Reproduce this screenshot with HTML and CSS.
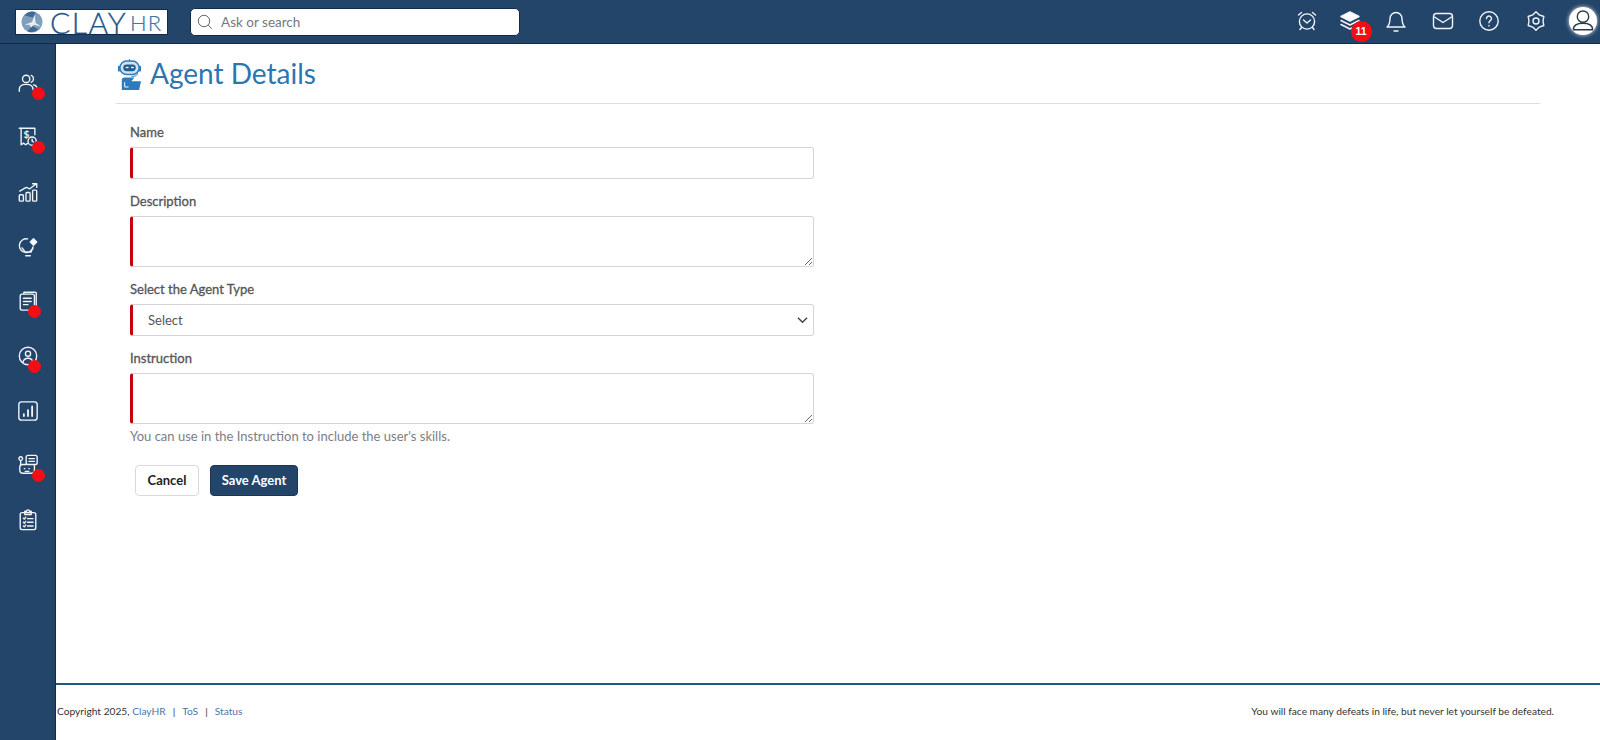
FILE: index.html
```html
<!DOCTYPE html>
<html lang="en">
<head>
<meta charset="utf-8">
<title>Agent Details</title>
<link rel="stylesheet" href="styles.css">
</head>
<body>
<header class="topbar">
  <div class="logo">
    <svg class="logo-mark" viewBox="0 0 24 24"><circle cx="12" cy="12" r="11.5" fill="#7f9fbd"/><path d="M4 5a11 11 0 0 1 12-4l-3 6z" fill="#3f6a94"/><path d="M19 20a11 11 0 0 1-12 2l5-6z" fill="#41698f"/><path d="M4 15l8-3 3-8 1 9 6 4-8-2-3 3-2-3z" fill="#e8eef4"/></svg>
    <span class="logo-clay">CLAY</span><span class="logo-hr">HR</span>
  </div>
  <div class="search">
    <svg class="search-icon" viewBox="0 0 16 16"><circle cx="7" cy="7" r="5.7"/><path d="M11.2 11.2l3.6 3.6"/></svg>
    <span>Ask or search</span>
  </div>
  <nav class="top-icons">
    <button class="top-btn top-btn-first"><svg viewBox="0 0 24 24"><circle cx="12" cy="12.500" r="7.600"/><path d="M8.500 11l3.500 3 3.500-3M3.500 6L6.500 3.500M20.500 6L17.500 3.500M6.500 18.500L5 20.500M17.500 18.500L19 20.500"/></svg></button>
    <button class="top-btn"><svg viewBox="0 0 24 24"><path d="M12 3l9 4.500-9 4.500-9-4.500z" fill="#fff"/><path d="M3 11.500l9 4.500 9-4.500M3 15.500l9 4.500 9-4.500"/></svg><span class="count">11</span></button>
    <button class="top-btn"><svg viewBox="0 0 24 24"><path d="M3 18c2.500-2 3-4 3-8.500a6 6 0 0 1 12 0c0 4.500.5 6.500 3 8.500zM10 22h4"/></svg></button>
    <button class="top-btn"><svg viewBox="0 0 24 24"><rect x="2.500" y="4.500" width="19" height="15" rx="3"/><path d="M3.500 8l8.500 5.500L20.500 8"/></svg></button>
    <button class="top-btn"><svg viewBox="0 0 24 24"><circle cx="12" cy="12" r="9.200"/><path d="M9.500 9.500a2.500 2.500 0 1 1 3.800 2.100c-.9.6-1.300 1.100-1.300 2.100M12 16.500v.5"/></svg></button>
    <button class="top-btn"><svg viewBox="0 0 24 24"><path d="M12 2.800L15.300 5.900 19.800 7.500 19 12 19.800 16.500 15.300 18.100 12 21.200 8.700 18.100 4.200 16.500 5 12 4.200 7.500 8.700 5.900z"/><circle cx="12" cy="12" r="3"/></svg></button>
    <div class="avatar"><svg viewBox="0 0 32 32"><circle cx="16" cy="11" r="6.500"/><path d="M5 26c0-5 4-7.500 11-7.500S27 21 27 26z"/></svg></div>
  </nav>
</header>
<div class="shell">
  <aside class="sidebar">
    <a class="side-item"><svg viewBox="0 0 24 24"><circle cx="10" cy="7.500" r="4"/><path d="M15.500 3.800a4 4 0 0 1 0 7.400M2.500 21v-2c0-3.500 3-5.500 7.500-5.500s7.500 2 7.500 5.500M18 14c2.500.5 4 2 4 4.500"/></svg><i class="dot"></i></a>
    <a class="side-item"><svg viewBox="0 0 24 24"><path d="M2.500 2.500h17v7M4.500 2.500v18l2.500-1.800 2.500 1.800 2-1.500"/><circle cx="16.500" cy="16.500" r="4.500"/><path d="M16.500 14.500v2l1.500 1"/><text x="7.200" y="13.500" class="dollar">$</text></svg><i class="dot"></i></a>
    <a class="side-item"><svg viewBox="0 0 24 24"><rect x="2.500" y="15" width="4.500" height="7" rx="1"/><rect x="9.800" y="12.500" width="4.500" height="9.500" rx="1"/><rect x="17" y="10" width="4.500" height="12" rx="1"/><path d="M3 11l7-4 4 1.500 7-5.500M17 3h4.500v4"/></svg></a>
    <a class="side-item"><svg viewBox="0 0 24 24"><path d="M17.500 12a7.500 7.500 0 1 1-6-8.800M8.500 17.500h7M9.500 21.500h5M8.500 17.500c0-2-2-2.500-3-4.500M15.500 17.500c0-1.500 1-2.500 2-4"/><path d="M18 3l3.500 3.500L18 10l-3.500-3.500z" fill="#fff"/></svg></a>
    <a class="side-item"><svg viewBox="0 0 24 24"><path d="M7.500 4V2.500h12.500a1 1 0 0 1 1 1V18h-2"/><rect x="3.500" y="4.500" width="15.500" height="17.500" rx="2"/><path d="M7 9h8.500M7 12.500h8.500M7 16h5"/></svg><i class="dot dot-low"></i></a>
    <a class="side-item"><svg viewBox="0 0 24 24"><circle cx="12" cy="12" r="9.500"/><circle cx="12" cy="9.500" r="2.800"/><path d="M6.500 19c.5-3 2.500-4.500 5.500-4.500s5 1.500 5.500 4.500"/></svg><i class="dot dot-low"></i></a>
    <a class="side-item"><svg viewBox="0 0 24 24"><rect x="2" y="2" width="20" height="20" rx="3"/><path d="M7.500 17.500v-2M12 17.500V11M16.500 17.500V7" class="thick"/></svg></a>
    <a class="side-item"><svg viewBox="0 0 24 24"><rect x="10" y="1.500" width="12" height="10" rx="2"/><path d="M13 5h6M13 8h6M6 11.500h4M4 7a2 2 0 1 1 .1 0zM4 8v4M6 11.500c-2 0-3 1-3 3v3c0 2 1 3.500 3.500 3.500h9c2 0 3.500-1.500 3.500-3.500V12M8 16h.5M13 16h.5M9 19h4"/></svg><i class="dot"></i></a>
    <a class="side-item"><svg viewBox="0 0 24 24"><rect x="3.500" y="4" width="17" height="18.500" rx="2"/><path d="M8.500 4V2.500h2a1.500 1.500 0 0 1 3 0h2V6h-7zM7 10l1 1 1.500-2M11.500 10.500h6M7 14.500l1 1 1.500-2M11.500 14.500h6M7 18.500l1 1 1.500-2M11.500 18.500h6"/></svg></a>
  </aside>
  <div class="content">
    <main class="main">
      <div class="page-head">
        <svg class="agent-icon" viewBox="0 0 26 34"><path d="M13 1v2" stroke="#2f7ab8" fill="none"/><rect x="3" y="3" width="20" height="14" rx="7" fill="#cfe3f2" stroke="#2f7ab8" stroke-width="1.500"/><rect x="6.500" y="6.500" width="13" height="7" rx="3.500" fill="#245d8c"/><rect x="9" y="9" width="3" height="1.400" fill="#fff"/><rect x="14.500" y="9" width="3" height="1.400" fill="#fff"/><rect x="1" y="8" width="2" height="6" rx="1" fill="#2f7ab8"/><rect x="23" y="8" width="2" height="6" rx="1" fill="#2f7ab8"/><path d="M21 15c1 3-2 4-6 4" stroke="#2f7ab8" fill="none"/><path d="M5 33V23a3 3 0 0 1 3-3h10l-3 4h10l-2 9z" fill="#2f7ab8"/><path d="M8 25v5h4" stroke="#fff" fill="none"/></svg>
        <h1 class="page-title">Agent Details</h1>
      </div>
      <form class="agent-form">
        <div class="field">
          <label class="label" for="f-name">Name</label>
          <input class="control required input-box" id="f-name" type="text">
        </div>
        <div class="field">
          <label class="label" for="f-desc">Description</label>
          <textarea class="control required area-box" id="f-desc"></textarea>
        </div>
        <div class="field">
          <label class="label" for="f-type">Select the Agent Type</label>
          <div class="select-wrap">
            <select class="control required select-box" id="f-type"><option>Select</option></select>
            <svg class="chevron" viewBox="0 0 12 8"><path d="M1 1.500l5 5 5-5"/></svg>
          </div>
        </div>
        <div class="field">
          <label class="label" for="f-ins">Instruction</label>
          <textarea class="control required area-box" id="f-ins"></textarea>
          <p class="hint">You can use in the Instruction to include the user's skills.</p>
        </div>
        <div class="actions">
          <button type="button" class="btn btn-cancel">Cancel</button>
          <button type="button" class="btn btn-save">Save Agent</button>
        </div>
      </form>
    </main>
    <footer class="footer">
      <div class="foot-left">Copyright 2025, <a>ClayHR</a><span class="sep">|</span><a>ToS</a><span class="sep">|</span><a>Status</a></div>
      <div class="foot-right">You will face many defeats in life, but never let yourself be defeated.</div>
    </footer>
  </div>
</div>
</body>
</html>
```
FILE: styles.css
```css
* { box-sizing: border-box; }
html, body { height: 100%; }
body {
  margin: 0;
  height: 740px;
  overflow: hidden;
  display: flex;
  flex-direction: column;
  font-family: Lato, "Liberation Sans", sans-serif;
  color: #555;
  background: #fff;
}
.topbar {
  height: 44px;
  flex: none;
  background: #23456a;
  border-bottom: 1px solid #12294a;
  display: flex;
  align-items: center;
  padding: 0 3px 0 15px;
}
.logo {
  width: 153px;
  height: 26px;
  background: #fff;
  border: 1px solid #12294a;
  display: flex;
  align-items: center;
  padding-left: 5px;
  color: #2a5f8f;
}
.logo-mark { width: 22px; height: 22px; flex: none; }
.logo-clay { font-weight: 300; font-size: 30px; line-height: 24px; margin-left: 7px; letter-spacing: 1.500px; color: #1f5488; -webkit-text-stroke: .3px #1f5488; }
.logo-hr { font-weight: 300; font-size: 22px; line-height: 24px; margin-left: 3px; margin-top: 2px; color: #3a77a8; letter-spacing: 1px; -webkit-text-stroke: .2px #3a77a8; }
.search {
  width: 330px;
  height: 28px;
  margin-left: 22px;
  background: #fff;
  border: 1px solid #12294a;
  border-radius: 5px;
  display: flex;
  align-items: center;
  padding-left: 6px;
  gap: 8px;
  font-size: 13.500px;
  color: #77777a;
}
.search-icon { width: 16px; height: 16px; fill: none; stroke: #666; stroke-width: 1; }
.top-icons { margin-left: auto; display: flex; align-items: center; padding-bottom: 2px; }
.top-btn {
  position: relative;
  width: 46.500px;
  height: 36px;
  padding: 0;
  border: 0;
  background: none;
  display: flex;
  align-items: center;
  justify-content: center;
}
.top-btn-first { margin-right: -4px; }
.top-btn svg { width: 24px; height: 24px; flex: none; fill: none; stroke: #f1f5f9; stroke-width: 1.400; stroke-linecap: round; stroke-linejoin: round; }
.count {
  position: absolute;
  left: 24px;
  top: 18px;
  width: 21px;
  height: 21px;
  border-radius: 50%;
  background: #f30d14;
  color: #fff;
  font-size: 10.500px;
  font-weight: 700;
  line-height: 21px;
  text-align: center;
}
.avatar {
  width: 28px;
  height: 28px;
  margin-left: 10px;
  border-radius: 50%;
  background: #fff;
  box-shadow: 0 0 4px #dfe5ea;
  overflow: hidden;
  flex: none;
}
.avatar svg { display: block; width: 28px; height: 28px; fill: #fff; stroke: #2c3a48; stroke-width: 1.600; }
.shell { flex: 1; display: flex; min-height: 0; }
.sidebar {
  width: 56px;
  flex: none;
  background: #23456a;
  border-right: 1px solid #12294a;
  display: flex;
  flex-direction: column;
  align-items: center;
  padding-top: 27.500px;
  gap: 32.700px;
}
.side-item { position: relative; width: 22px; height: 22px; display: block; }
.side-item svg { display: block; width: 22px; height: 22px; fill: none; stroke: #f1f5f9; stroke-width: 1.500; stroke-linecap: round; stroke-linejoin: round; }
.side-item svg .thick { stroke-width: 2; }
.side-item svg .dollar { fill: #f1f5f9; stroke: none; font-size: 11px; font-weight: 700; font-family: Lato, sans-serif; }
.dot {
  position: absolute;
  left: 15px;
  top: 15px;
  width: 13px;
  height: 13px;
  border-radius: 50%;
  background: #f30d14;
}
.dot-low { left: 11px; }
.content { flex: 1; min-width: 0; display: flex; flex-direction: column; }
.main { flex: 1; padding: 0 60px 0 60px; min-height: 0; }
.page-head {
  height: 60px;
  display: flex;
  align-items: center;
  gap: 8px;
  border-bottom: 1px solid #dcdfe2;
  padding-left: 1px;
  padding-top: 1px;
}
.agent-icon { width: 25px; height: 33px; flex: none; }
.page-title { margin: 0; font-size: 28px; font-weight: 400; color: #2b76b1; line-height: 1.200; }
.agent-form { width: 684px; margin-left: 14px; padding-top: 18px; }
.field { margin-bottom: 12px; }
.label { display: block; font-size: 13px; font-weight: 400; color: #555; -webkit-text-stroke: .3px #555; line-height: 20px; margin-bottom: 5px; }
.control {
  display: block;
  width: 100%;
  font-family: inherit;
  font-size: 13px;
  color: #555;
  background: #fff;
  border: 1px solid #d3d5d8;
  border-radius: 3px;
  outline: 0;
}
.required { border-left: 3px solid #c4040c; }
.input-box { height: 32px; }
.area-box { height: 51px; resize: vertical; }
.select-wrap { position: relative; }
.select-box { height: 32px; appearance: none; padding-left: 15px; }
.chevron { position: absolute; right: 6px; top: 12px; width: 11px; height: 8px; fill: none; stroke: #444; stroke-width: 1.600; }
.hint { margin: 3px 0 0; font-size: 13px; line-height: 18px; color: #7d7d85; }
.actions { display: flex; gap: 11px; margin-left: 5px; padding-top: 7.500px; }
.btn {
  height: 31px;
  border-radius: 4px;
  font-family: inherit;
  font-size: 13px;
  font-weight: 700;
  padding: 0;
}
.btn-cancel { width: 64px; background: #fff; border: 1px solid #d8dadd; color: #222; }
.btn-save { width: 88px; background: #23456a; border: 1px solid #1a3556; color: #fff; }
.footer {
  height: 57px;
  flex: none;
  border-top: 2px solid #215a80;
  display: flex;
  justify-content: space-between;
  align-items: center;
  padding: 0 46px 3px 1px;
  font-size: 10.200px;
  color: #333;
}
.foot-left a { color: #4b77a8; }
.sep { margin: 0 7px; }
```
